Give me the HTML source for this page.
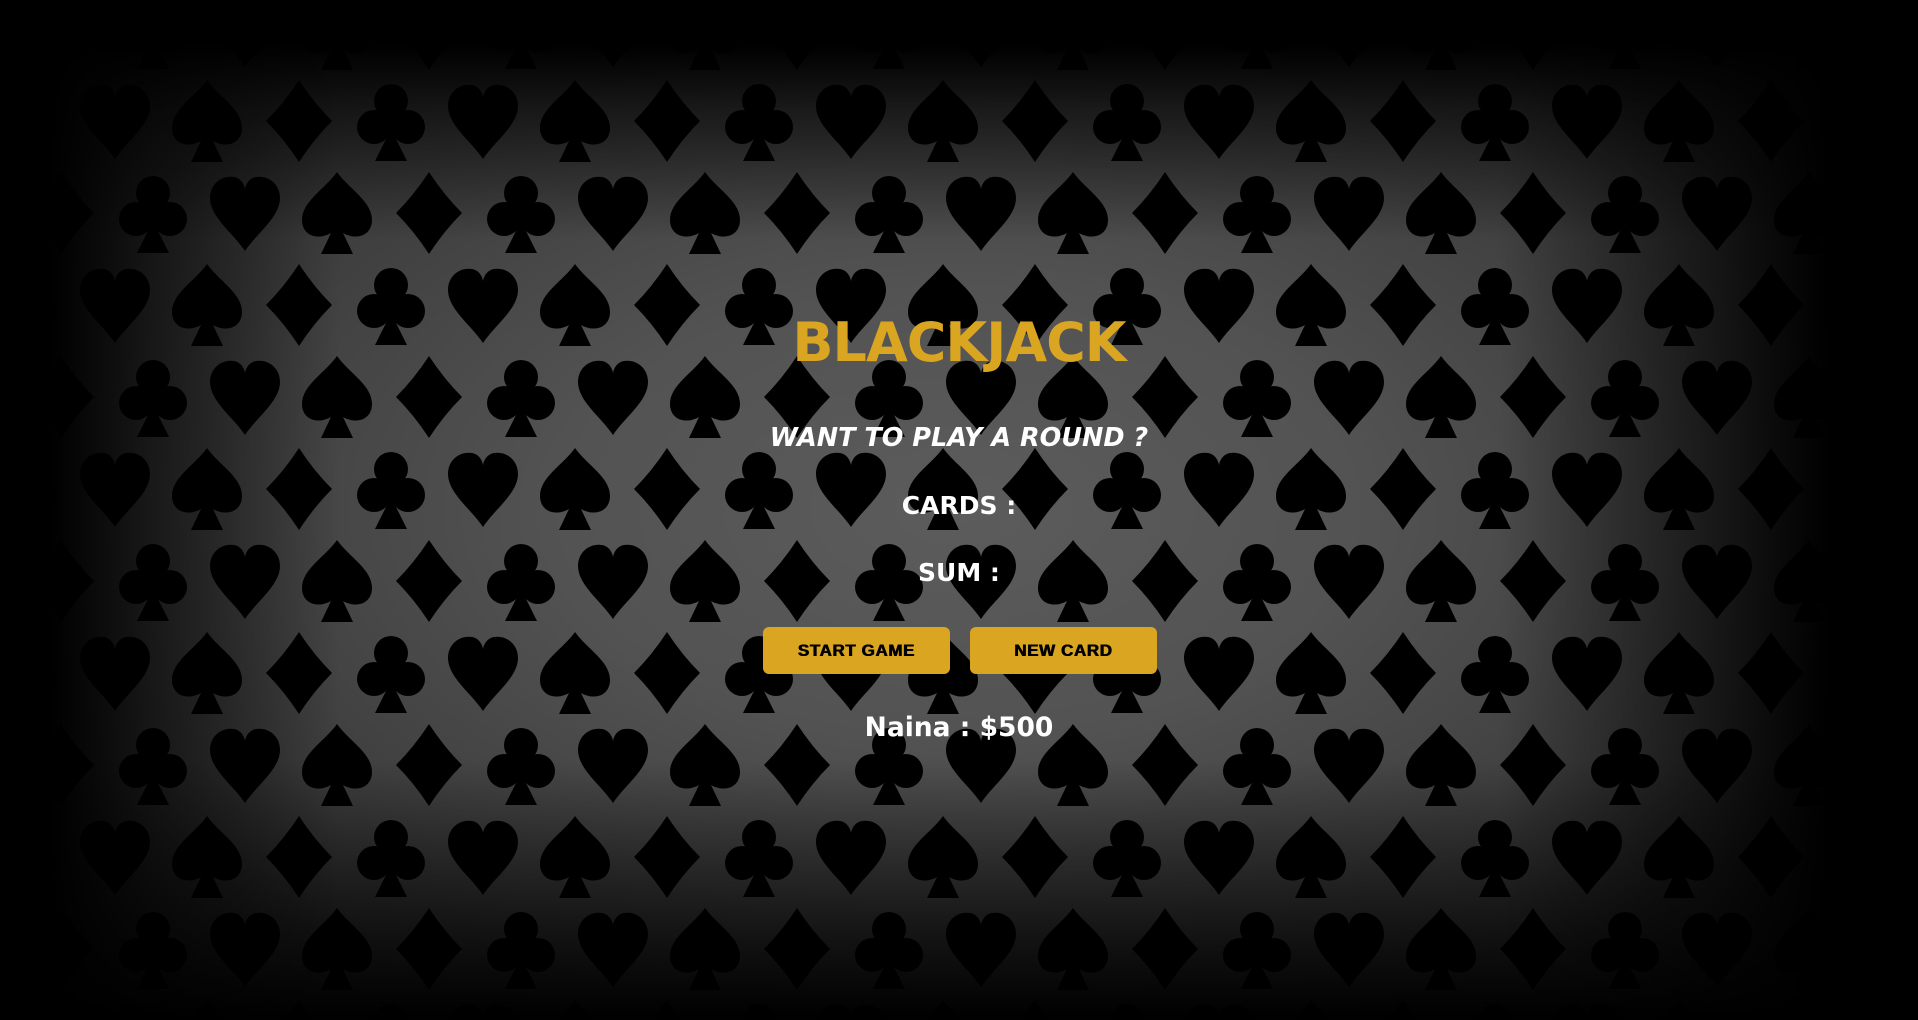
<!DOCTYPE html>
<html><head><meta charset="utf-8"><style>
html,body{margin:0;padding:0;width:1918px;height:1020px;overflow:hidden;background:#000}
.bg{position:absolute;left:0;top:0}
.vig{position:absolute;left:0;top:0;width:1918px;height:1020px;
background:
linear-gradient(to right, #000 0, #000 50px, rgba(0,0,0,0.6) 150px, rgba(0,0,0,0) 340px),
linear-gradient(to left, #000 0, #000 90px, rgba(0,0,0,0.6) 210px, rgba(0,0,0,0) 420px),
linear-gradient(to bottom, #000 0, #000 45px, rgba(0,0,0,0.6) 110px, rgba(0,0,0,0) 240px),
linear-gradient(to top, #000 0, rgba(0,0,0,0.7) 80px, rgba(0,0,0,0) 260px),
radial-gradient(ellipse 1000px 560px at 50% 50%, rgba(0,0,0,0) 0%, rgba(0,0,0,0.1) 40%, rgba(0,0,0,0.45) 100%);}
.c{position:absolute;left:0;width:1918px;text-align:center;font-family:"DejaVu Sans","Liberation Sans",sans-serif;font-weight:bold;color:#fff}
.btn{position:absolute;top:627px;height:47px;width:187px;background:#daa520;border-radius:6px;font-family:"Liberation Sans",sans-serif;font-weight:900;font-size:17px;color:#000;text-align:center;line-height:47px;letter-spacing:0.6px;text-shadow:0.4px 0 0 #000,-0.4px 0 0 #000}
</style></head><body>
<svg class="bg" width="1918" height="1020" xmlns="http://www.w3.org/2000/svg">
<defs>
<path id="sp" d="M0,-41 C-12,-24 -35,-12 -35,7 C-35,22 -20,28 -6,20 L-16,41 L16,41 L6,20 C20,28 35,22 35,7 C35,-12 12,-24 0,-41Z"/>
<path id="ht" d="M0,38 C-12,20 -35,4 -35,-15 C-35,-30 -22,-38 -11,-36 C-5,-35 -1,-30 0,-24 C1,-30 5,-35 11,-36 C22,-38 35,-30 35,-15 C35,4 12,20 0,38Z"/>
<path id="dm" d="M0,-41 Q15,-18 33,0 Q15,18 0,41 Q-15,18 -33,0 Q-15,-18 0,-41Z"/>
<g id="cl"><circle cx="0" cy="-20" r="17"/><circle cx="-17" cy="6" r="17"/><circle cx="17" cy="6" r="17"/><circle cx="0" cy="2" r="12"/><path d="M0,8 L-16,40 L16,40Z"/></g>
<pattern id="p" patternUnits="userSpaceOnUse" width="368" height="184" x="161" y="259">
<g fill="#000">
<use href="#sp" x="46" y="46"/><use href="#dm" x="138" y="46"/><use href="#cl" x="230" y="46"/><use href="#ht" x="322" y="46"/>
<use href="#ht" x="84" y="138"/><use href="#sp" x="176" y="138"/><use href="#dm" x="268" y="138"/><use href="#cl" x="360" y="138"/><use href="#cl" x="-8" y="138"/>
<use href="#sp" x="46" y="230"/><use href="#dm" x="138" y="230"/><use href="#cl" x="230" y="230"/><use href="#ht" x="322" y="230"/>
<use href="#ht" x="84" y="-46"/><use href="#sp" x="176" y="-46"/><use href="#dm" x="268" y="-46"/><use href="#cl" x="360" y="-46"/><use href="#cl" x="-8" y="-46"/>
<use href="#sp" x="414" y="46"/><use href="#sp" x="414" y="230"/><use href="#ht" x="-46" y="46"/><use href="#ht" x="-46" y="230"/>
</g>
</pattern>
</defs>
<rect width="1918" height="1020" fill="#5c5c5c"/>
<rect width="1918" height="1020" fill="url(#p)"/>
</svg>
<div class="vig"></div>
<div class="c" style="top:311px;font-size:54px;color:#daa520;letter-spacing:-1px">BLACKJACK</div>
<div class="c" style="top:423px;font-size:25.5px;font-style:italic">WANT TO PLAY A ROUND ?</div>
<div class="c" style="top:491px;font-size:25px">CARDS :</div>
<div class="c" style="top:558px;font-size:25px">SUM :</div>
<div class="btn" style="left:763px">START GAME</div>
<div class="btn" style="left:970px">NEW CARD</div>
<div class="c" style="top:712px;font-size:26.5px">Naina : $500</div>
</body></html>
